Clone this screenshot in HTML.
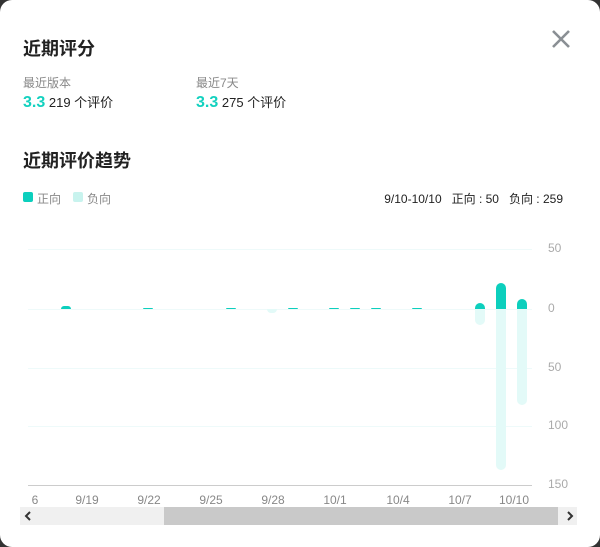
<!DOCTYPE html>
<html><head><meta charset="utf-8"><style>
body{margin:0;width:600px;height:547px;background:#333;overflow:hidden;font-family:"Liberation Sans","Noto Sans CJK SC",sans-serif;}
.m{position:absolute;left:0;top:0;width:600px;height:547px;background:#fff;border-radius:12px;}
.t{position:absolute;font-weight:bold;font-size:18px;color:#222;}
.s{position:absolute;font-size:12px;color:#888;}
.v{position:absolute;font-size:13px;color:#222;}
.v b{color:#13d1bf;font-size:16px;font-weight:900;}
.g{position:absolute;left:28px;width:504px;height:1px;background:#eefafa;}
.yl{position:absolute;left:548px;font-size:12px;color:#aaa;}
.xl{position:absolute;top:493px;font-size:12px;color:#888;transform:translateX(-50%);}
.p{position:absolute;width:10px;background:#0ccfbd;border-radius:5px 5px 0 0;}
.n{position:absolute;width:10px;background:#e3faf8;border-radius:0 0 5px 5px;}
</style></head><body><div class="m">
<div class="t" style="left:23px;top:35px">近期评分</div>
<svg style="position:absolute;left:551px;top:29px" width="20" height="20"><path d="M2 2L18 18M18 2L2 18" stroke="#8a8f94" stroke-width="2.6"/></svg>
<div class="s" style="left:23px;top:74px">最近版本</div>
<div class="v" style="left:23px;top:92px"><b>3.3</b> 219 个评价</div>
<div class="s" style="left:196px;top:74px">最近7天</div>
<div class="v" style="left:196px;top:92px"><b>3.3</b> 275 个评价</div>
<div class="t" style="left:23px;top:147px">近期评价趋势</div>
<div style="position:absolute;left:23px;top:192px;width:10px;height:10px;background:#0ccfbd;border-radius:2px"></div>
<div class="s" style="left:37px;top:190px">正向</div>
<div style="position:absolute;left:73px;top:192px;width:10px;height:10px;background:#c8f3ee;border-radius:2px"></div>
<div class="s" style="left:87px;top:190px">负向</div>
<div style="position:absolute;right:37px;top:190px;font-size:12px;color:#222">9/10-10/10 &nbsp;&nbsp;正向 : 50 &nbsp;&nbsp;负向 : 259</div>
<div class="g" style="top:249px"></div><div class="g" style="top:309px"></div><div class="g" style="top:368px"></div><div class="g" style="top:426px"></div><div class="g" style="top:485px;background:#ccc"></div>
<div class="yl" style="top:241px">50</div><div class="yl" style="top:301px">0</div><div class="yl" style="top:360px">50</div><div class="yl" style="top:418px">100</div><div class="yl" style="top:477px">150</div>
<div class="xl" style="left:35px">6</div><div class="xl" style="left:87px">9/19</div><div class="xl" style="left:149px">9/22</div><div class="xl" style="left:211px">9/25</div><div class="xl" style="left:273px">9/28</div><div class="xl" style="left:335px">10/1</div><div class="xl" style="left:398px">10/4</div><div class="xl" style="left:460px">10/7</div><div class="xl" style="left:514px">10/10</div>
<div class="p" style="left:61px;top:306px;height:3px"></div>
<div class="p" style="left:143px;top:308px;height:1px"></div><div class="p" style="left:226px;top:308px;height:1px"></div>
<div class="p" style="left:288px;top:308px;height:1px"></div><div class="p" style="left:329px;top:308px;height:1px"></div><div class="p" style="left:350px;top:308px;height:1px"></div><div class="p" style="left:371px;top:308px;height:1px"></div><div class="p" style="left:412px;top:308px;height:1px"></div>
<div class="n" style="left:267px;top:309px;height:4px"></div>
<div class="p" style="left:475px;top:303px;height:6px"></div><div class="n" style="left:475px;top:309px;height:16px"></div>
<div class="p" style="left:496px;top:283px;height:26px"></div><div class="n" style="left:496px;top:309px;height:161px"></div>
<div class="p" style="left:517px;top:299px;height:10px"></div><div class="n" style="left:517px;top:309px;height:96px"></div>
<div style="position:absolute;left:20px;top:507px;width:557px;height:18px;background:#f0f0f0"></div>
<div style="position:absolute;left:164px;top:507px;width:394px;height:18px;background:#c9c9c9"></div>
<svg style="position:absolute;left:24px;top:511px" width="8" height="10"><path d="M6 1L2 5L6 9" stroke="#333" stroke-width="2" fill="none"/></svg>
<svg style="position:absolute;left:566px;top:511px" width="8" height="10"><path d="M2 1L6 5L2 9" stroke="#333" stroke-width="2" fill="none"/></svg>
</div></body></html>
